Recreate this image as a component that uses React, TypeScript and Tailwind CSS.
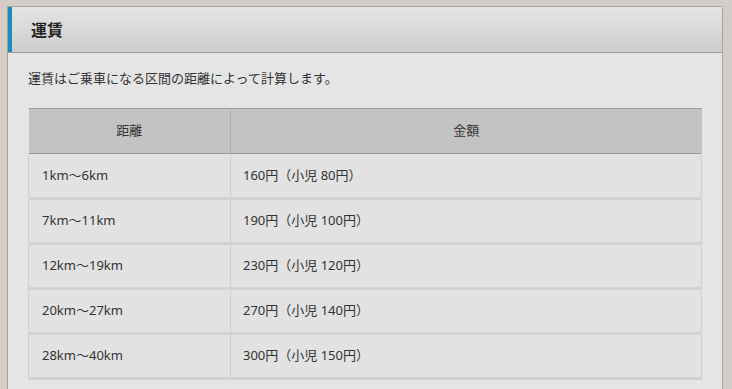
import React from 'react';

const fares = [
  { range: '1km～6km', price: '160円（小児 80円）' },
  { range: '7km～11km', price: '190円（小児 100円）' },
  { range: '12km～19km', price: '230円（小児 120円）' },
  { range: '20km～27km', price: '270円（小児 140円）' },
  { range: '28km～40km', price: '300円（小児 150円）' },
];

export default function App() {
  return (
    <div
      className="w-[732px] h-[389px] overflow-hidden bg-[#d4ccc7] pl-[7px] pr-[9px] pt-[6px] text-[#333]"
      style={{ fontFamily: '"Noto Sans", "Noto Sans CJK JP", sans-serif' }}
    >
      <div className="h-full border border-b-0 border-[#a3a3a3] rounded-tr-[3px] bg-[#e5e5e5]">
        {/* Section header with blue accent */}
        <div className="h-[46px] flex items-center border-b border-[#9c9c9c] bg-gradient-to-b from-[#e5e5e5] to-[#cdcdcd]">
          <div className="w-[4px] h-full bg-[#1a8db8]" />
          <h2 className="ml-[19px] text-[16px] font-bold text-[#222] leading-none">運賃</h2>
        </div>

        <div className="px-[20px]">
          <p className="mt-[15px] text-[13px] leading-[20px]">
            運賃はご乗車になる区間の距離によって計算します。
          </p>

          {/* Fare table */}
          <table className="mt-[20px] w-[674px] border-collapse text-[13px]">
            <thead>
              <tr className="h-[45px] bg-[#c3c3c3] border-y border-[#9a9a9a]">
                <th className="w-[202px] font-normal text-center border-r border-[#b0b0b0]">距離</th>
                <th className="font-normal text-center">金額</th>
              </tr>
            </thead>
            <tbody>
              {fares.map((f) => (
                <tr key={f.range} className="h-[45px] bg-[#e2e2e2] border-b-[3px] border-[#d2d2d2]">
                  <td className="pl-[13px] border-x border-[#cfcfcf]">{f.range}</td>
                  <td className="pl-[12px] border-r border-[#cfcfcf]">{f.price}</td>
                </tr>
              ))}
            </tbody>
          </table>
        </div>
      </div>
    </div>
  );
}
